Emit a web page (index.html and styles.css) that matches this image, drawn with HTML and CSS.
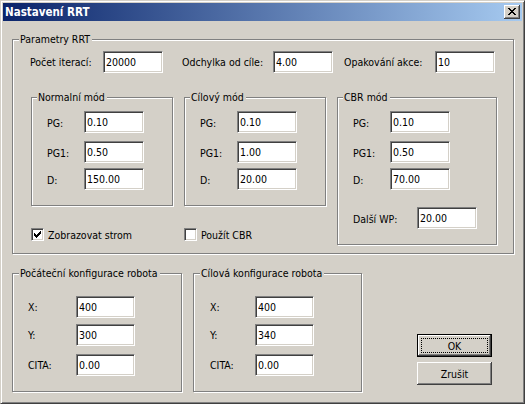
FILE: index.html
```html
<!DOCTYPE html>
<html lang="cs">
<head>
    <meta charset="UTF-8">
    <title>Nastavení RRT</title>
    <link rel="stylesheet" href="styles.css">
</head>
<body>
    <div class="window">
        <div class="titlebar">
            <span class="title">Nastavení RRT</span>
            <button class="close" type="button">
                <svg width="16" height="14" viewBox="0 0 16 14" shape-rendering="crispEdges">
                    <path fill="#000" d="M4 3h2v1h-2z M10 3h2v1h-2z M5 4h2v1h-2z M9 4h2v1h-2z M6 5h4v1h-4z M7 6h2v1h-2z M6 7h4v1h-4z M5 8h2v1h-2z M9 8h2v1h-2z M4 9h2v1h-2z M10 9h2v1h-2z"/>
                </svg>
            </button>
        </div>
        <div class="client">
            <div class="group params">
                <div class="group-title">Parametry RRT</div>
                <div class="params-body">
                    <div class="top-row">
                        <span class="lbl w-iter">Počet iterací:</span>
                        <input class="edit" type="text" value="20000">
                        <span class="lbl w-odch">Odchylka od cíle:</span>
                        <input class="edit" type="text" value="4.00">
                        <span class="lbl w-opak">Opakování akce:</span>
                        <input class="edit" type="text" value="10">
                    </div>
                    <div class="modes">
                        <div class="group mode">
                            <div class="group-title">Normalní mód</div>
                            <div class="mode-body">
                                <div class="field"><span class="lbl">PG:</span><input class="edit" type="text" value="0.10"></div>
                                <div class="field f-pg1"><span class="lbl">PG1:</span><input class="edit" type="text" value="0.50"></div>
                                <div class="field f-d"><span class="lbl">D:</span><input class="edit" type="text" value="150.00"></div>
                            </div>
                        </div>
                        <div class="group mode">
                            <div class="group-title">Cílový mód</div>
                            <div class="mode-body">
                                <div class="field"><span class="lbl">PG:</span><input class="edit" type="text" value="0.10"></div>
                                <div class="field f-pg1"><span class="lbl">PG1:</span><input class="edit" type="text" value="1.00"></div>
                                <div class="field f-d"><span class="lbl">D:</span><input class="edit" type="text" value="20.00"></div>
                            </div>
                        </div>
                        <div class="group mode cbr">
                            <div class="group-title">CBR mód</div>
                            <div class="mode-body">
                                <div class="field"><span class="lbl">PG:</span><input class="edit" type="text" value="0.10"></div>
                                <div class="field f-pg1"><span class="lbl">PG1:</span><input class="edit" type="text" value="0.50"></div>
                                <div class="field f-d"><span class="lbl">D:</span><input class="edit" type="text" value="70.00"></div>
                                <div class="field f-wp"><span class="lbl wide">Další WP:</span><input class="edit" type="text" value="20.00"></div>
                            </div>
                        </div>
                        <div class="check-item">
                            <span class="checkbox">
                                <svg width="13" height="13" viewBox="0 0 13 13" shape-rendering="crispEdges">
                                    <path fill="#000" d="M9 3h1v1h-1z M8 4h2v1h-2z M3 5h1v1h-1z M7 5h3v1h-3z M3 6h2v1h-2z M6 6h3v1h-3z M3 7h5v1h-5z M4 8h3v1h-3z M5 9h1v1h-1z"/>
                                </svg>
                            </span>
                            <span class="check-label">Zobrazovat strom</span>
                        </div>
                        <div class="check-item">
                            <span class="checkbox"></span>
                            <span class="check-label">Použít CBR</span>
                        </div>
                    </div>
                </div>
            </div>

            <div class="bottom-row">
                <div class="group cfg cfg-start">
                    <div class="group-title">Počáteční konfigurace robota</div>
                    <div class="cfg-body">
                        <div class="field"><span class="lbl">X:</span><input class="edit" type="text" value="400"></div>
                        <div class="field c-y"><span class="lbl">Y:</span><input class="edit" type="text" value="300"></div>
                        <div class="field c-cita"><span class="lbl">CITA:</span><input class="edit" type="text" value="0.00"></div>
                    </div>
                </div>
                <div class="group cfg cfg-goal">
                    <div class="group-title">Cílová konfigurace robota</div>
                    <div class="cfg-body">
                        <div class="field"><span class="lbl">X:</span><input class="edit" type="text" value="400"></div>
                        <div class="field c-y"><span class="lbl">Y:</span><input class="edit" type="text" value="340"></div>
                        <div class="field c-cita"><span class="lbl">CITA:</span><input class="edit" type="text" value="0.00"></div>
                    </div>
                </div>
                <div class="buttons">
                    <button class="btn default" type="button"><span class="focus">OK</span></button>
                    <button class="btn" type="button">Zrušit</button>
                </div>
            </div>
        </div>
    </div>
</body>
</html>
```

FILE: styles.css
```css
* {
    box-sizing: border-box;
}
body {
    margin: 0;
    font-family: "DejaVu Sans Condensed", "Liberation Sans", Arial, sans-serif;
    font-size: 10.5px;
    color: #000;
    background-color: #d4d0c8;
}
.window {
    width: 525px;
    height: 404px;
    padding: 2px;
    background-color: #d4d0c8;
    border: 1px solid;
    border-color: #d4d0c8 #404040 #404040 #d4d0c8;
    box-shadow: inset 1px 1px #fff, inset -1px -1px #808080;
}
.titlebar {
    height: 18px;
    display: flex;
    align-items: center;
    justify-content: space-between;
    padding: 0 2px 0 2px;
    background: linear-gradient(to right, #0a246a, #a6caf0);
}
.title {
    color: #fff;
    font-weight: bold;
    font-size: 11.5px;
}
.close {
    width: 16px;
    height: 14px;
    padding: 0;
    margin: 0;
    border: 0;
    display: block;
    background-color: #d4d0c8;
    box-shadow: inset -1px -1px #404040, inset 1px 1px #fff, inset -2px -2px #808080;
}
.close svg {
    display: block;
}
.client {
    padding: 18px 0 0 9px;
}

/* group box */
.group {
    border: 1px solid #808080;
    box-shadow: inset 1px 1px #fff, 1px 1px #fff;
}
.group-title {
    width: fit-content;
    margin: -7px 0 0 5px;
    padding: 0 2px 0 1px;
    line-height: 13px;
    background-color: #d4d0c8;
}
.params {
    width: 502px;
    height: 215px;
}
.params > .group-title {
    margin-left: 6px;
}
.params-body {
    padding: 5px 0 0 17px;
}
.top-row {
    display: flex;
    align-items: center;
}
.lbl {
    display: block;
    flex: none;
}
.w-iter { width: 73px; }
.w-odch { width: 91px; margin-left: 19px; }
.w-opak { width: 91px; margin-left: 11px; }

.edit {
    width: 60px;
    height: 22px;
    margin: 0;
    padding: 0 2px;
    font: inherit;
    color: #000;
    background-color: #fff;
    border: 1px solid;
    border-color: #808080 #fff #fff #808080;
    box-shadow: inset 1px 1px #404040, inset -1px -1px #d4d0c8;
    outline: none;
}

.modes {
    display: grid;
    grid-template-columns: 142px 142px 160px;
    grid-template-rows: 109px auto;
    column-gap: 11px;
    margin: 24px 0 0 1px;
}
.mode {
    height: 109px;
}
.mode.cbr {
    grid-column: 3;
    grid-row: 1 / 3;
    height: 148px;
}
.mode-body {
    padding: 7px 0 0 15px;
}
.field {
    display: flex;
    align-items: center;
}
.mode .lbl {
    width: 37px;
    padding-top: 2px;
}
.mode .lbl.wide {
    width: 64px;
}
.f-pg1 { margin-top: 8px; }
.f-d { margin-top: 5px; }
.f-wp { margin-top: 17px; }

.check-item {
    display: flex;
    align-items: center;
    margin-top: 22px;
    align-self: start;
}
.checkbox {
    width: 13px;
    height: 13px;
    flex: none;
    background-color: #fff;
    border: 1px solid;
    border-color: #808080 #fff #fff #808080;
    box-shadow: inset 1px 1px #404040, inset -1px -1px #d4d0c8;
}
.checkbox svg {
    display: block;
    margin: -1px;
}
.check-label {
    margin-left: 4px;
}

/* bottom part */
.bottom-row {
    display: flex;
    align-items: flex-start;
    margin-top: 19px;
}
.cfg {
    height: 119px;
}
.cfg-start {
    width: 170px;
}
.cfg-goal {
    width: 169px;
    margin-left: 11px;
}
.cfg .group-title {
    margin-left: 6px;
}
.cfg-body {
    padding: 16px 0 0 15px;
}
.cfg-goal .cfg-body {
    padding-left: 16px;
}
.cfg .lbl {
    width: 48px;
}
.cfg-goal .lbl {
    width: 45px;
}
.cfg .edit {
    width: 59px;
}
.c-y { margin-top: 6px; }
.c-cita { margin-top: 8px; }

.buttons {
    display: flex;
    flex-direction: column;
    gap: 5px;
    margin: 61px 0 0 55px;
}
.btn {
    width: 75px;
    height: 23px;
    margin: 0;
    padding: 0;
    font: inherit;
    color: #000;
    background-color: #d4d0c8;
    border: 0;
    box-shadow: inset -1px -1px #404040, inset 1px 1px #fff, inset -2px -2px #808080, inset 2px 2px #d4d0c8;
}
.btn.default {
    border: 1px solid #000;
    padding: 3px;
}
.focus {
    display: flex;
    align-items: center;
    justify-content: center;
    height: 100%;
    border: 1px dotted #000;
}
```
